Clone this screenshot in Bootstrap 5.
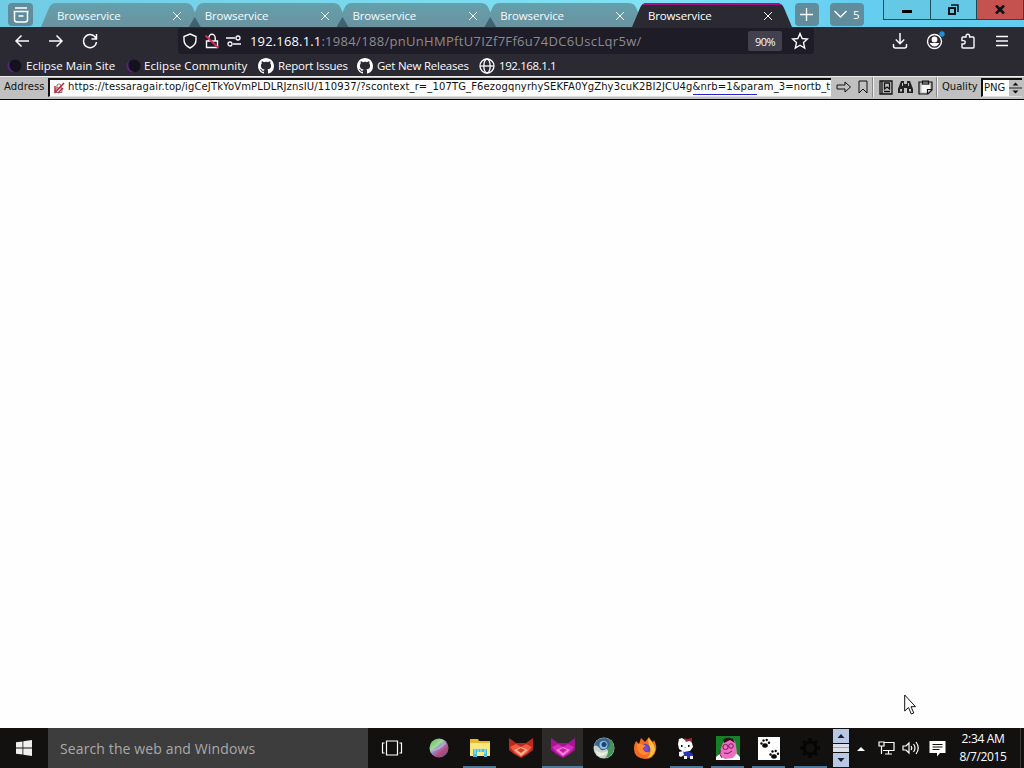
<!DOCTYPE html>
<html lang="en">
<head>
    <meta charset="UTF-8">
    <meta name="viewport" content="width=device-width, initial-scale=1.0">
    <title>Browservice</title>
    <link href="https://cdn.jsdelivr.net/npm/bootstrap@5.3.3/dist/css/bootstrap.min.css" rel="stylesheet">
    <style>
        body { width: 1024px; height: 768px; overflow: hidden; background: #fefefe; font-family: "Open Sans", "Noto Sans", sans-serif; font-size: 12px; line-height: 1; }
        svg { display: block; flex: none; }
        .ln { fill: none; stroke: currentColor; }
        .fit { white-space: nowrap; }

        /* tab strip */
        .tab-strip { height: 27px; background: linear-gradient(90deg, #70cbe4, #7ad8ec 35%, #80e2f5 65%, #64cdf0 84%, #62cdef); color: #fff; }
        .tool-btn { background: #608c9c; border-radius: 4px; height: 23px; margin-top: 3px; }
        .win-tab { width: 160px; height: 24px; margin-top: 3px; margin-right: -12.25px; padding: 1px 19px 0 16px; background: linear-gradient(#64a0ad, #6b929f); clip-path: path("M0 24 L8 5 Q10 0 15 0 L144 0 Q150 0 152 5 L160 24 Z"); color: #f2fbfd; position: relative; }
        .win-tab + .win-tab::before { content: ""; position: absolute; left: 0; bottom: 0; width: 12px; height: 10px; background: #41636f; clip-path: polygon(0 100%, 50% 0, 100% 100%); }
        .win-tab.current { background: #2b2a33; border-top: 2px solid #a3127f; padding-top: 0; color: #fff; }
        .win-tab.current::before { display: none; }
        .tab-name { font-size: 11.5px; letter-spacing: -.15px; }
        .win-ctl { height: 20px; border: 1px solid #194b5b; border-top: 0; color: #061216; background: #65c9e6; margin-right: -1px; }
        .win-ctl.shut { background: #c5524f; width: 48px; margin-right: 0; }

        /* browser toolbars */
        .nav-row { height: 28px; background: #2b2a33; color: #fbfbfe; }
        .url-box { width: 636px; height: 26px; background: #1e1c26; border-radius: 3px; }
        .url-text { font-size: 13px; color: #8c8b93; letter-spacing: .31px; }
        .url-text b { font-weight: 400; color: #fbfbfe; letter-spacing: .15px; }
        .zoom-pct { width: 34px; height: 20px; background: #42414d; border-radius: 2px; font-size: 11px; letter-spacing: -.6px; }
        .mark-row { height: 21px; background: #2b2a33; color: #fbfbfe; font-size: 11.5px; }

        /* in-page control bar */
        .ctl-bar { height: 24px; background: #c0c0c0; border-bottom: 1px solid #000; border-top: 1px solid #eee; font-family: "DejaVu Sans", sans-serif; font-size: 10px; color: #111; padding-bottom: 2px; }
        .addr-box { width: 783px; height: 19px; background: #fff; border: 2px solid #111; border-right: 0; border-bottom: 1px solid #ddd; overflow: hidden; }
        .addr-text { letter-spacing: .125px; }
        .bar-sep { width: 2px; height: 20px; border-left: 1px solid #888; border-right: 1px solid #eee; }
        .png-box { width: 41px; height: 19px; background: #fff; border: 2px solid #111; border-right: 0; border-bottom: 1px solid #ddd; }
        .load-line { left: 693px; top: 94px; width: 64px; height: 1px; background: #2424c8; }

        /* taskbar */
        .task-bar { height: 40px; background: #13110f; color: #fff; }
        .find-box { width: 320px; height: 40px; background: #3d3d3d; color: #a9a9a9; font-size: 14px; letter-spacing: .12px; }
        .app { width: 41.3px; height: 40px; padding: 0 4px; }
        .app.open::after { content: ""; display: block; height: 2px; width: 33px; background: #4f7798; position: absolute; bottom: 0; left: 4px; }
        .app.front { background: #2d2b2a; }
        .app.front::after { width: 41px; left: 0; }
        .clock { width: 60px; font-size: 12px; line-height: 18px; letter-spacing: -.35px; }
    </style>
</head>
<body class="d-flex flex-column">

<!-- Tabs -->
<div class="tab-strip d-flex flex-shrink-0">
    <div class="tool-btn d-flex align-items-center justify-content-center" style="width:25px;margin-left:8px;margin-right:8px">
        <svg width="18" height="18" viewBox="0 0 18 18" class="ln" stroke-width="1.5"><path d="M3 2h12M1.5 5.5h15M2.5 5.5v8q0 2.5 2.5 2.5h8q2.500 0 2.500-2.500v-8M6.500 10h5"/></svg>
    </div>
    <div class="win-tab d-flex align-items-center justify-content-between"><span class="tab-name">Browservice</span><svg width="10" height="10" class="ln"><path d="M1 1l8 8M9 1l-8 8"/></svg></div>
    <div class="win-tab d-flex align-items-center justify-content-between"><span class="tab-name">Browservice</span><svg width="10" height="10" class="ln"><path d="M1 1l8 8M9 1l-8 8"/></svg></div>
    <div class="win-tab d-flex align-items-center justify-content-between"><span class="tab-name">Browservice</span><svg width="10" height="10" class="ln"><path d="M1 1l8 8M9 1l-8 8"/></svg></div>
    <div class="win-tab d-flex align-items-center justify-content-between"><span class="tab-name">Browservice</span><svg width="10" height="10" class="ln"><path d="M1 1l8 8M9 1l-8 8"/></svg></div>
    <div class="win-tab current d-flex align-items-center justify-content-between"><span class="tab-name">Browservice</span><svg width="10" height="10" class="ln"><path d="M1 1l8 8M9 1l-8 8"/></svg></div>
    <div class="tool-btn d-flex align-items-center justify-content-center" style="width:24px;margin-left:15px">
        <svg width="13" height="13" class="ln" stroke-width="1.3"><path d="M6.500 0v13M0 6.500h13"/></svg>
    </div>
    <div class="tool-btn d-flex align-items-center justify-content-center" style="width:34px;margin-left:11px">
        <svg width="13" height="9" class="ln" stroke-width="1.3"><path d="M.5 1l6 6 6-6"/></svg><span class="tab-name" style="margin-left:6px">5</span>
    </div>
    <div class="d-flex ms-auto">
        <div class="win-ctl d-flex align-items-center justify-content-center" style="width:48px"><svg width="10" height="3" style="margin-top:4px"><path d="M0 0h10v3H0z"/></svg></div>
        <div class="win-ctl d-flex align-items-center justify-content-center" style="width:47px"><svg width="11" height="11" class="ln" stroke-width="2"><path d="M1 4h6v6H1z"/><path d="M3 1h7v7" stroke-width="1.500"/></svg></div>
        <div class="win-ctl shut d-flex align-items-center justify-content-center"><svg width="10" height="9" class="ln" stroke-width="2.500"><path d="M1 .5l8 8M9 .5l-8 8"/></svg></div>
    </div>
</div>

<!-- Navigation -->
<div class="nav-row d-flex align-items-center flex-shrink-0">
    <svg width="16" height="16" class="ln" stroke-width="1.500" style="margin-left:14px"><path d="M15 8H2M7.500 2.500L2 8l5.500 5.500"/></svg>
    <svg width="16" height="16" class="ln" stroke-width="1.500" style="margin-left:18px"><path d="M1 8h13M8.500 2.500L14 8l-5.500 5.500"/></svg>
    <svg width="16" height="16" class="ln" stroke-width="1.500" style="margin-left:18px"><path d="M14 5.500A6.500 6.500 0 1 0 14.500 9M14.500 1v5H9.500"/></svg>
    <div class="url-box d-flex align-items-center" style="margin-left:80px">
        <svg width="16" height="16" class="ln" stroke-width="1.400" style="margin-left:4px"><path d="M8 1l6 2.500v3.500q0 5-6 8-6-3-6-8V3.500z"/></svg>
        <svg width="16" height="16" class="ln" stroke-width="1.400" style="margin-left:6px"><path d="M2.500 8h11v6.500h-11zM4.800 8V5a3.200 3.700 0 0 1 6.400 0v3"/><path d="M1.500 2.500l12.500 12" stroke="#e22850" stroke-width="1.800"/></svg>
        <svg width="16" height="16" class="ln" stroke-width="1.300" style="margin-left:6px"><path d="M0 5h9M7 11h8"/><circle cx="12" cy="5" r="2"/><circle cx="4" cy="11" r="2"/></svg>
        <span class="url-text text-nowrap" style="margin-left:8px;margin-top:1px"><b>192.168.1.1</b>:1984/188/pnUnHMPftU7IZf7Ff6u74DC6UscLqr5w/</span>
        <span class="zoom-pct d-flex align-items-center justify-content-center ms-auto">90%</span>
        <svg width="18" height="18" class="ln" stroke-width="1.400" style="margin:0 5px 0 9px"><path d="M9 1.500l2.200 5 5.300.5-4 3.600 1.200 5.400L9 13.200 4.300 16l1.200-5.400-4-3.600 5.300-.5z"/></svg>
    </div>
    <div class="d-flex align-items-center ms-auto" style="gap:18px;margin-right:14px">
        <svg width="16" height="16" class="ln" stroke-width="1.500"><path d="M8 0v10.500M3.800 6.500L8 10.700l4.200-4.200M1.500 11v2q0 2 2 2h9q2 0 2-2v-2"/></svg>
        <svg width="19" height="20" class="ln" stroke-width="1.400" style="margin-right:-3px;margin-top:-3px"><circle cx="8.500" cy="11.500" r="7"/><circle cx="8.500" cy="9.500" r="2.200" fill="currentColor"/><path d="M5 13.800h7q-1.300 2-3.500 2t-3.500-2z" fill="currentColor"/><circle cx="16" cy="4" r="2.700" fill="#1592e0" stroke="none"/></svg>
        <svg width="16" height="16" class="ln" stroke-width="1.400"><path d="M6 4V3a1.800 1.800 0 0 1 3.600 0v1H13q1 0 1 1v9q0 1-1 1H3q-1 0-1-1v-3h1.500a1.700 1.700 0 0 0 0-3.400H2V5q0-1 1-1z"/></svg>
        <svg width="16" height="16" class="ln" stroke-width="1.300"><path d="M2 3.500h12M2 8h12M2 12.500h12"/></svg>
    </div>
</div>

<!-- Bookmarks -->
<div class="mark-row d-flex align-items-center flex-shrink-0">
    <svg width="16" height="16" viewBox="0 0 16 16" style="margin-left:6px"><circle cx="9" cy="8" r="6.500" fill="#15111d"/><path d="M5 2Q0 5 1.800 10q2 5 8 4.500Q4 12.500 3.500 8T5 2z" fill="#58227f"/></svg>
    <span class="fit" style="margin-left:4px;width:99px">Eclipse Main Site</span>
    <svg width="16" height="16" viewBox="0 0 16 16"><circle cx="9" cy="8" r="6.500" fill="#15111d"/><path d="M5 2Q0 5 1.800 10q2 5 8 4.500Q4 12.500 3.500 8T5 2z" fill="#58227f"/></svg>
    <span class="fit" style="margin-left:3px;width:114px;letter-spacing:.08px">Eclipse Community</span>
    <svg width="16" height="16" viewBox="0 0 16 16" fill="#fff"><path d="M8 0C3.580 0 0 3.580 0 8c0 3.540 2.290 6.530 5.470 7.590.4.070.55-.17.55-.38v-1.490c-2.010.37-2.530-.49-2.690-.94-.09-.23-.48-.94-.82-1.130-.28-.15-.68-.52-.01-.53.63-.01 1.080.58 1.230.82.72 1.210 1.870.87 2.330.66.07-.52.28-.87.51-1.070-1.780-.2-3.640-.89-3.640-3.950 0-.87.31-1.590.82-2.150-.08-.2-.36-1.020.08-2.120 0 0 .67-.21 2.200.82A7.600 7.600 0 0 1 8 3.860c.68 0 1.360.09 2 .27 1.530-1.040 2.200-.82 2.200-.82.44 1.100.16 1.920.08 2.120.51.56.82 1.270.82 2.150 0 3.070-1.870 3.750-3.650 3.950.29.25.54.73.54 1.480v2.200c0 .21.15.46.55.38A8 8 0 0 0 16 8c0-4.420-3.580-8-8-8z"/></svg>
    <span class="fit" style="margin-left:4px;width:79px;letter-spacing:-.2px">Report Issues</span>
    <svg width="16" height="16" viewBox="0 0 16 16" fill="#fff"><path d="M8 0C3.580 0 0 3.580 0 8c0 3.540 2.290 6.530 5.470 7.590.4.070.55-.17.55-.38v-1.490c-2.010.37-2.530-.49-2.690-.94-.09-.23-.48-.94-.82-1.130-.28-.15-.68-.52-.01-.53.63-.01 1.080.58 1.230.82.72 1.210 1.870.87 2.330.66.07-.52.28-.87.51-1.070-1.780-.2-3.640-.89-3.640-3.950 0-.87.31-1.590.82-2.150-.08-.2-.36-1.020.08-2.120 0 0 .67-.21 2.200.82A7.600 7.600 0 0 1 8 3.860c.68 0 1.360.09 2 .27 1.530-1.040 2.200-.82 2.200-.82.44 1.100.16 1.920.08 2.120.51.56.82 1.270.82 2.150 0 3.070-1.870 3.750-3.650 3.950.29.25.54.73.54 1.480v2.200c0 .21.15.46.55.38A8 8 0 0 0 16 8c0-4.420-3.580-8-8-8z"/></svg>
    <span class="fit" style="margin-left:4px;width:102px;letter-spacing:-.25px">Get New Releases</span>
    <svg width="16" height="16" class="ln" stroke-width="1.300"><circle cx="8" cy="8" r="7"/><ellipse cx="8" cy="8" rx="3.200" ry="7"/><path d="M1 8h14"/></svg>
    <span class="fit" style="margin-left:4px;letter-spacing:-.4px">192.168.1.1</span>
</div>

<!-- Address bar -->
<div class="ctl-bar d-flex align-items-center flex-shrink-0">
    <span style="margin-left:4px;width:44px;letter-spacing:.1px">Address</span>
    <div class="addr-box d-flex align-items-center">
        <svg width="12" height="12" class="ln" style="margin-left:3px"><path d="M3 6h6v4.500H3zM4 6V3q2-2.500 4 0v3" stroke="#777"/><path d="M1.500 11L11 1M2 4v7M5 11l5-5" stroke="#d01830" stroke-width="1.400"/></svg>
        <span class="addr-text text-nowrap" style="margin-left:3px;margin-top:-1px">https://tessaragair.top/igCeJTkYoVmPLDLRJznsIU/110937/?scontext_r=_107TG_F6ezogqnyrhySEKFA0YgZhy3cuK2BI2JCU4g&amp;nrb=1&amp;param_3=nortb_t</span>
    </div>
    <svg width="16" height="14" class="ln" style="margin-left:5px"><path d="M1 5h8V2l5.500 5L9 12V9H1z"/></svg>
    <svg width="10" height="14" class="ln" style="margin-left:6px"><path d="M1 1h8v12L5 9l-4 4z"/></svg>
    <div class="bar-sep" style="margin:0 5px 0 4px"></div>
    <svg width="14" height="15" class="ln" stroke-width="1.300"><path d="M1 1h12v13H1zM3 1v13M5.500 3v6L8 7l2.500 2V3zM5 11.500h6"/></svg>
    <svg width="15" height="14" fill="#222" style="margin-left:5px"><path d="M3 1h3v3h3V1h3l3 8v4h-6V8H6v5H0V9z"/><path d="M2 9h2v2.500H2zM11 9h2v2.500h-2zM4 3h1v3H4zM10 3h1v3h-1z" fill="#c0c0c0"/></svg>
    <svg width="15" height="15" class="ln" stroke-width="1.200" style="margin-left:5px"><path d="M1 2h13v8l-4 4H1z" fill="#bbb"/><path d="M3.500 5h8.500v4.500L9 12.500H3.500z" fill="#f5f5f5" stroke="none"/><path d="M4.500 1h6v3h-6zM9.500 14v-4.500H14"/></svg>
    <div class="bar-sep" style="margin:0 4px 0 3px"></div>
    <span>Quality</span>
    <div class="png-box d-flex align-items-center justify-content-between ms-auto" style="margin-right:2px">
        <span style="margin-left:1px">PNG</span>
        <svg width="13" height="16"><path d="M0 0h13v16H0z" fill="#c0c0c0"/><path d="M0 8h13" stroke="#222"/><path d="M3.500 5.500l3-3 3 3zM3.500 10.500l3 3 3-3z" fill="#111"/></svg>
    </div>
</div>
<div class="load-line position-absolute"></div>

<!-- Empty page -->
<main class="flex-grow-1"></main>

<!-- Taskbar -->
<div class="task-bar d-flex align-items-center flex-shrink-0">
    <svg width="16" height="16" viewBox="0 0 16 16" fill="#f0eeee" style="margin:0 16px"><path d="M0 2.300L6.500 1.400v6.200H0zM7.300 1.300L16 0v7.600H7.300zM0 8.400h6.500v6.200L0 13.700zM7.300 8.400H16V16l-8.700-1.300z"/></svg>
    <div class="find-box d-flex align-items-center"><span style="margin-left:12px;margin-top:2px">Search the web and Windows</span></div>
    <svg width="22" height="16" class="ln" stroke-width="1.200" style="margin:0 13px 0 13px"><path d="M5.500 1h11v14h-11zM3.500 3h-2v10h2M18.500 3h2v10h-2"/></svg>
    <div class="d-flex" style="margin-left:2px">
        <div class="app position-relative d-flex align-items-center justify-content-center">
            <svg width="20" height="20"><defs><linearGradient id="orb" x1="0.100" y1="0" x2="0.900" y2="1"><stop offset="0" stop-color="#5bbd55"/><stop offset=".35" stop-color="#a5d7a0"/><stop offset=".5" stop-color="#9189c8"/><stop offset=".7" stop-color="#c04573"/><stop offset="1" stop-color="#4668b8"/></linearGradient></defs><circle cx="10" cy="10" r="9.500" fill="url(#orb)"/><path d="M2 13Q10 12 16 5" fill="none" stroke="#c6a7cf" stroke-width="1.500"/></svg>
        </div>
        <div class="app open position-relative d-flex align-items-center justify-content-center">
            <svg width="22" height="20"><path d="M1 1h8l1 2h11v15H1z" fill="#e8b82e"/><path d="M1 5h20v13H1z" fill="#fbe87c"/><path d="M4 11h14v8h-3v-5H8v5H4z" fill="#43bfe0"/><path d="M6 10v6M9 10v4M12 10v4M16 10v6" stroke="#b7edf5"/></svg>
        </div>
        <div class="app position-relative d-flex align-items-center justify-content-center">
            <svg width="26" height="22"><path d="M1 1l7 5h10l7-5v12l-5 4-7 4-7-4-5-4z" fill="#b92822"/><path d="M2 10l6-3 5 3 5-3 6 3-5 6-6 4-6-4z" fill="#ed5c3c"/><path d="M6 13l7-3 7 3-7 6z" fill="#ffb496"/><path d="M9 13l4-2 4 2-4 3z" fill="#d23c30"/></svg>
        </div>
        <div class="app open front position-relative d-flex align-items-center justify-content-center">
            <svg width="26" height="22"><path d="M1 1l7 5h10l7-5v12l-5 4-7 4-7-4-5-4z" fill="#a21595"/><path d="M2 10l6-3 5 3 5-3 6 3-5 6-6 4-6-4z" fill="#d82cba"/><path d="M6 13l7-3 7 3-7 6z" fill="#f581d5"/><path d="M9 13l4-2 4 2-4 3z" fill="#c520a9"/></svg>
        </div>
        <div class="app position-relative d-flex align-items-center justify-content-center">
            <svg width="22" height="22"><circle cx="11" cy="11" r="10.500" fill="#c6d3cc"/><path d="M12 1Q22 2 21 13q-2 7-9 8 5-5 2-9z" fill="#46935c"/><path d="M1 9Q3 1 11 1q6 0 6 7-3 6-9 5Q4 7 1 9z" fill="#39678f"/><circle cx="10.500" cy="8" r="4" fill="#92bedb"/><circle cx="11" cy="7.500" r="2.500" fill="#174576"/><path d="M2 13q6 5 13 1-3 6-10 5z" fill="#eceedb"/></svg>
        </div>
        <div class="app position-relative d-flex align-items-center justify-content-center">
            <svg width="24" height="24"><path d="M3 5l3 3 2-6 4 4 4-5q2 4 4 5l1-2q3 6 2 10-2 9-11 9Q1 22 1 13q0-5 2-8z" fill="#f56a25"/><path d="M15 2q7 6 7 12-2 7-8 8 6-6 2-12z" fill="#ffc640"/><circle cx="12" cy="13" r="5.300" fill="#6542b5"/><path d="M4 8q6-1 10 3l-4 1q0 5 7 4-4 5-9 2-5-4-4-10z" fill="#ff8930"/><circle cx="13" cy="12.500" r="2.500" fill="#8549c5"/></svg>
        </div>
        <div class="app open position-relative d-flex align-items-center justify-content-center">
            <svg width="20" height="24"><path d="M3 3l3-1 3 2h5l2 3 1 4-3 4-6 1-5-3-1-5z" fill="#fff"/><path d="M8 2l3 1 5-1v4l-3-1-3 1z" fill="#a52335"/><path d="M5 9h1.500v2H5zM12 9h1.500v2H12z" fill="#111"/><path d="M8 11h2v1H8z" fill="#edba22"/><path d="M6 16h8l3 2v4H8z" fill="#2935b5"/><path d="M3 16l4-1 1 4-3 2-2-1zM8 20h3v3H8zM14 20h3v3h-3z" fill="#f4f4fb"/></svg>
        </div>
        <div class="app open position-relative d-flex align-items-center justify-content-center">
            <svg width="24" height="24"><path d="M0 0h24v24H0z" fill="#168027"/><path d="M0 21l5-4 14-1 5 5v3H0z" fill="#fff"/><path d="M8 4l6-2 5 3 1 5 1 7-4 5-8 1-5-3 1-8z" fill="#ed6fc0"/><path d="M7 4q4-4 10-1l2 4-5-3-6 3z" fill="#2b1020"/><circle cx="9.500" cy="11" r="2.600" fill="none" stroke="#7c1760"/><circle cx="15" cy="10" r="2.300" fill="none" stroke="#7c1760"/><path d="M8 17q4 2 8-2M4 14q-1 5 2 8" fill="none" stroke="#7c1760"/></svg>
        </div>
        <div class="app open position-relative d-flex align-items-center justify-content-center">
            <svg width="22" height="23"><path d="M0 0h22v23H0z" fill="#fff"/><g id="paw" fill="#080808"><ellipse cx="7" cy="8.500" rx="2.800" ry="2.200"/><circle cx="3.500" cy="6.500" r="1.200"/><circle cx="5.500" cy="3.500" r="1.200"/><circle cx="8.700" cy="3" r="1.200"/><circle cx="11" cy="5.800" r="1.200"/></g><use href="#paw" x="9" y="11"/></svg>
        </div>
        <div class="app open position-relative d-flex align-items-center justify-content-center">
            <svg width="20" height="20" fill="none" stroke="#050505" stroke-width="3"><circle cx="10" cy="10" r="6"/><path d="M10 0v4M10 16v4M0 10h4M16 10h4M3 3l3 3M17 3l-3 3M3 17l3-3M17 17l-3-3"/></svg>
        </div>
    </div>
    <div class="d-flex align-items-center ms-auto">
        <svg width="16" height="38"><path d="M0 0h16v14H0zM0 24h16v14H0z" fill="#b7c7e4"/><path d="M0 15h16v8H0z" fill="#dce1e8"/><path d="M0 18.500h16" stroke="#94a4bc"/><path d="M4.500 9L8 5l3.500 4zM4.500 29L8 33l3.500-4z" fill="#16202e"/></svg>
        <svg width="8" height="5" style="margin-left:8px"><path d="M0 5l4-4 4 4z" fill="#fff"/></svg>
        <svg width="17" height="16" class="ln" stroke-width="1.200" style="margin-left:13px"><path d="M6 2.500h10v8H5M10.500 10.500v3M7 14h7M1 2h5v4H1zM3.500 6v8"/></svg>
        <svg width="18" height="16" class="ln" stroke-width="1.200" style="margin-left:7px"><path d="M1 6h3l3-3v10l-3-3H1zM9 6q1.500 2 0 4M11.500 4q3 4 0 8M14 2q4.500 6 0 12"/></svg>
        <svg width="17" height="17" fill="#fff" style="margin-left:9px"><path d="M.5 1h16v12H11l-3 3.500V13H.5z"/><path d="M3.500 4.500h10M3.500 7h10M3.500 9.500h7" stroke="#13110f"/></svg>
        <div class="clock text-center text-nowrap" style="margin-left:7px">2:34 AM<br>8/7/2015</div>
        <div style="width:1px;height:40px;background:#3c3a38;margin-left:7px;margin-right:3px"></div>
    </div>
</div>

<!-- Pointer -->
<svg class="position-absolute" style="left:904px;top:694px" width="12" height="21"><path d="M.7 1v16l3.800-3.500 2.800 6.500 2.500-1-2.800-6.300h4.500z" fill="#fff" stroke="#111"/></svg>

<script src="https://cdn.jsdelivr.net/npm/bootstrap@5.3.3/dist/js/bootstrap.bundle.min.js"></script>
</body>
</html>
